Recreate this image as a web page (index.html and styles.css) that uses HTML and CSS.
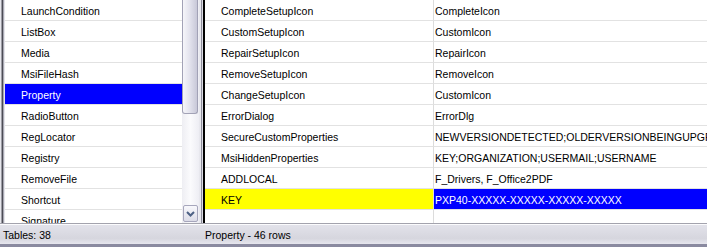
FILE: index.html
```html
<!DOCTYPE html>
<html lang="en">
<head>
    <meta charset="UTF-8">
    <title>Orca - Property</title>
    <link rel="stylesheet" href="styles.css">
</head>
<body>
    <div class="window">
        <div class="main">
            <div class="frame-left"></div>
            <div class="tables">
                <ul class="table-list">
                    <li>LaunchCondition</li>
                    <li>ListBox</li>
                    <li>Media</li>
                    <li>MsiFileHash</li>
                    <li class="selected">Property</li>
                    <li>RadioButton</li>
                    <li>RegLocator</li>
                    <li>Registry</li>
                    <li>RemoveFile</li>
                    <li>Shortcut</li>
                    <li>Signature</li>
                </ul>
                <div class="vscroll">
                    <div class="thumb"></div>
                    <div class="track"></div>
                    <div class="btn-down">
                        <svg width="9" height="6" viewBox="0 0 9 6"><path d="M1 1 L4.5 4.5 L8 1" fill="none" stroke="#4d6185" stroke-width="2"/></svg>
                    </div>
                </div>
            </div>
            <div class="splitter"></div>
            <div class="grid">
                <div class="row"><div class="name">CompleteSetupIcon</div><div class="value">CompleteIcon</div></div>
                <div class="row"><div class="name">CustomSetupIcon</div><div class="value">CustomIcon</div></div>
                <div class="row"><div class="name">RepairSetupIcon</div><div class="value">RepairIcon</div></div>
                <div class="row"><div class="name">RemoveSetupIcon</div><div class="value">RemoveIcon</div></div>
                <div class="row"><div class="name">ChangeSetupIcon</div><div class="value">CustomIcon</div></div>
                <div class="row"><div class="name">ErrorDialog</div><div class="value">ErrorDlg</div></div>
                <div class="row"><div class="name">SecureCustomProperties</div><div class="value">NEWVERSIONDETECTED;OLDERVERSIONBEINGUPGRADED</div></div>
                <div class="row"><div class="name">MsiHiddenProperties</div><div class="value">KEY;ORGANIZATION;USERMAIL;USERNAME</div></div>
                <div class="row"><div class="name">ADDLOCAL</div><div class="value">F_Drivers, F_Office2PDF</div></div>
                <div class="row current"><div class="name">KEY</div><div class="value">PXP40-XXXXX-XXXXX-XXXXX-XXXXX</div></div>
                <div class="row filler"><div class="name"></div><div class="value"></div></div>
            </div>
        </div>
        <div class="statusbar">
            <span class="st-tables">Tables: 38</span>
            <span class="st-rows">Property - 46 rows</span>
        </div>
    </div>
</body>
</html>
```
FILE: styles.css
```css
html, body{
    margin: 0;
    padding: 0;
}
body{
    width: 707px;
    height: 247px;
    overflow: hidden;
    background: #e3e3ea;
    font-family: "Liberation Sans", Arial, sans-serif;
    font-size: 10.5px;
    color: #000;
}
.window{
    display: flex;
    flex-direction: column;
    height: 247px;
}
.main{
    display: flex;
    height: 223px;
    border-bottom: 1px solid #a3a3ad;
}
.frame-left{
    width: 5px;
    background: linear-gradient(to right, #e6e6ec 0 1px, #9d9da5 1px 2px, #4c4c56 2px 3px, #a8a8b2 3px 4px, #e4e4ea 4px);
}
.tables{
    display: flex;
    width: 194px;
    background: #fff;
}
.table-list{
    list-style: none;
    margin: 0;
    padding: 0;
    width: 177px;
    overflow: hidden;
}
.table-list li{
    height: 20px;
    line-height: 22px;
    padding-left: 16px;
    border-bottom: 1px solid #e2e2e2;
    white-space: nowrap;
    overflow: hidden;
}
.table-list li.selected{
    background: #0000ff;
    color: #fff;
}
.vscroll{
    width: 17px;
    display: flex;
    flex-direction: column;
    background: linear-gradient(to right, #eeeef3, #fbfbfd 50%, #eeeef4);
}
.thumb{
    height: 113px;
    margin-right: 1px;
    border: 1px solid #a2a2b6;
    border-top: none;
    border-radius: 0 0 3px 3px;
    background: linear-gradient(to right, #f6f6fa, #e4e4ee 45%, #c8c8d8);
}
.track{
    flex: 1;
}
.btn-down{
    height: 15px;
    margin: 0 1px 1px 1px;
    border: 1px solid #a6a6bc;
    border-radius: 2px;
    background: linear-gradient(to bottom, #f8f8fc, #dcdce8);
    display: flex;
    align-items: center;
    justify-content: center;
}
.splitter{
    width: 4px;
    background: linear-gradient(to right, #e8e8ee 0 2px, #8e8e9c 2px 3px, #dcdce4 3px);
}
.grid{
    flex: 1;
    display: flex;
    flex-direction: column;
    background: #fff;
    border-left: 2px solid #000;
    overflow: hidden;
}
.row{
    display: grid;
    grid-template-columns: 229px 1fr;
    height: 21px;
    flex-shrink: 0;
}
.row > div{
    height: 20px;
    line-height: 22px;
    border-bottom: 1px solid #e2e2e2;
    white-space: nowrap;
    overflow: hidden;
}
.row .name{
    padding-left: 16px;
    border-right: 1px solid #dcdcdc;
}
.row .value{
    padding-left: 1px;
}
.row.current .name{
    background: #ffff00;
}
.row.current .value{
    background: #0000ff;
    color: #fff;
}
.row.filler{
    flex: 1;
}
.row.filler > div{
    height: auto;
    border-bottom: none;
}
.statusbar{
    flex: 1;
    display: flex;
    align-items: center;
    padding-top: 1px;
    border-top: 1px solid #fbfbfd;
    border-bottom: 3px solid #8a8aa0;
    background: linear-gradient(to bottom, #e2e2ea, #d6d6de 70%, #e6e6ee);
    font-size: 10.5px;
}
.st-tables{
    width: 202px;
    padding-left: 3px;
}
.st-rows{
    padding-left: 0;
}
```
